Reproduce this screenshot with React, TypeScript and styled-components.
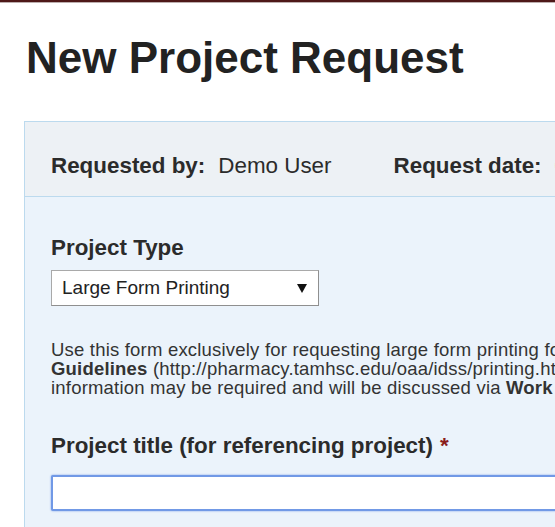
import React from "react";
import styled, { createGlobalStyle } from "styled-components";

const C = {
  maroon: "#4e1818",
  text: "#2b2b2b",
  boxBorder: "#bcdaee",
  headBg: "#edf1f5",
  bodyBg: "#ebf3fb",
  star: "#8a1c1c",
  focus: "#7199e6",
};

const Global = createGlobalStyle`
  html, body { margin: 0; padding: 0; background: #fff; overflow: hidden; }
  body { font-family: "Liberation Sans", Arial, sans-serif; color: ${C.text}; }
`;

const Page = styled.div`
  width: 555px;
  height: 527px;
  overflow: hidden;
`;

const TopBar = styled.div`
  height: 2px;
  background: ${C.maroon};
  border-bottom: 1px solid #bcaeae;
`;

const Title = styled.h1`
  margin: 31px 0 0 26px;
  font-size: 44px;
  line-height: 48px;
  font-weight: 700;
  color: #222;
  white-space: nowrap;
`;

const Panel = styled.div`
  margin: 39px 0 0 24px;
  width: 640px;
  border: 1px solid ${C.boxBorder};
  border-right: none;
`;

const PanelHead = styled.div`
  display: flex;
  align-items: center;
  height: 75px;
  padding: 14px 26px 0;
  box-sizing: border-box;
  background: ${C.headBg};
  border-bottom: 1px solid ${C.boxBorder};
  font-size: 22.4px;
  white-space: nowrap;
`;

const Meta = styled.span<{ $gap?: number }>`
  display: inline-flex;
  gap: 13px;
  margin-right: ${(p) => p.$gap ?? 0}px;
`;

const Strong = styled.b`
  font-weight: 700;
`;

const PanelBody = styled.div`
  background: ${C.bodyBg};
  padding: 38px 26px 30px;
`;

const Label = styled.div`
  font-size: 22.4px;
  line-height: 26px;
  font-weight: 700;
  white-space: nowrap;
`;

const Req = styled.span`
  color: ${C.star};
  margin-left: 7px;
`;

const Select = styled.div`
  display: flex;
  align-items: center;
  justify-content: space-between;
  margin-top: 9px;
  width: 268px;
  height: 36px;
  box-sizing: border-box;
  padding: 0 11px 0 10px;
  background: #fff;
  border: 1px solid #a9a9a9;
  border-right-color: #8f8f8f;
  border-bottom-color: #8f8f8f;
  font-size: 19px;
  color: #222;
`;

const Caret = styled.span`
  width: 0;
  height: 0;
  border-left: 5px solid transparent;
  border-right: 5px solid transparent;
  border-top: 9px solid #111;
`;

const Help = styled.p`
  margin: 34px 0 0;
  font-size: 18.5px;
  letter-spacing: 0.2px;
  line-height: 19px;
  color: #333;
  white-space: nowrap;
`;

const Field = styled.div`
  margin-top: 36px;
`;

const Input = styled.div`
  margin-top: 16px;
  height: 36px;
  box-sizing: border-box;
  background: #fff;
  border: 2px solid ${C.focus};
  border-radius: 2px;
  box-shadow: 0 0 2px ${C.focus};
`;

export default function App() {
  return (
    <Page>
      <Global />
      <TopBar />
      <Title>New Project Request</Title>
      <Panel>
        <PanelHead>
          <Meta $gap={62}>
            <Strong>Requested by:</Strong>
            <span>Demo User</span>
          </Meta>
          <Meta>
            <Strong>Request date:</Strong>
            <span>07/14/2016</span>
          </Meta>
        </PanelHead>
        <PanelBody>
          <Label>Project Type</Label>
          <Select>
            <span>Large Form Printing</span>
            <Caret />
          </Select>
          <Help>
            Use this form exclusively for requesting large form printing for posters. Please follow the Poster Printing
            <br />
            <Strong>Guidelines</Strong> (http://pharmacy.tamhsc.edu/oaa/idss/printing.html) when preparing your file. Additional
            <br />
            information may be required and will be discussed via <Strong>Work Order</Strong> comments.
          </Help>
          <Field>
            <Label>
              Project title (for referencing project)<Req>*</Req>
            </Label>
            <Input />
          </Field>
        </PanelBody>
      </Panel>
    </Page>
  );
}
